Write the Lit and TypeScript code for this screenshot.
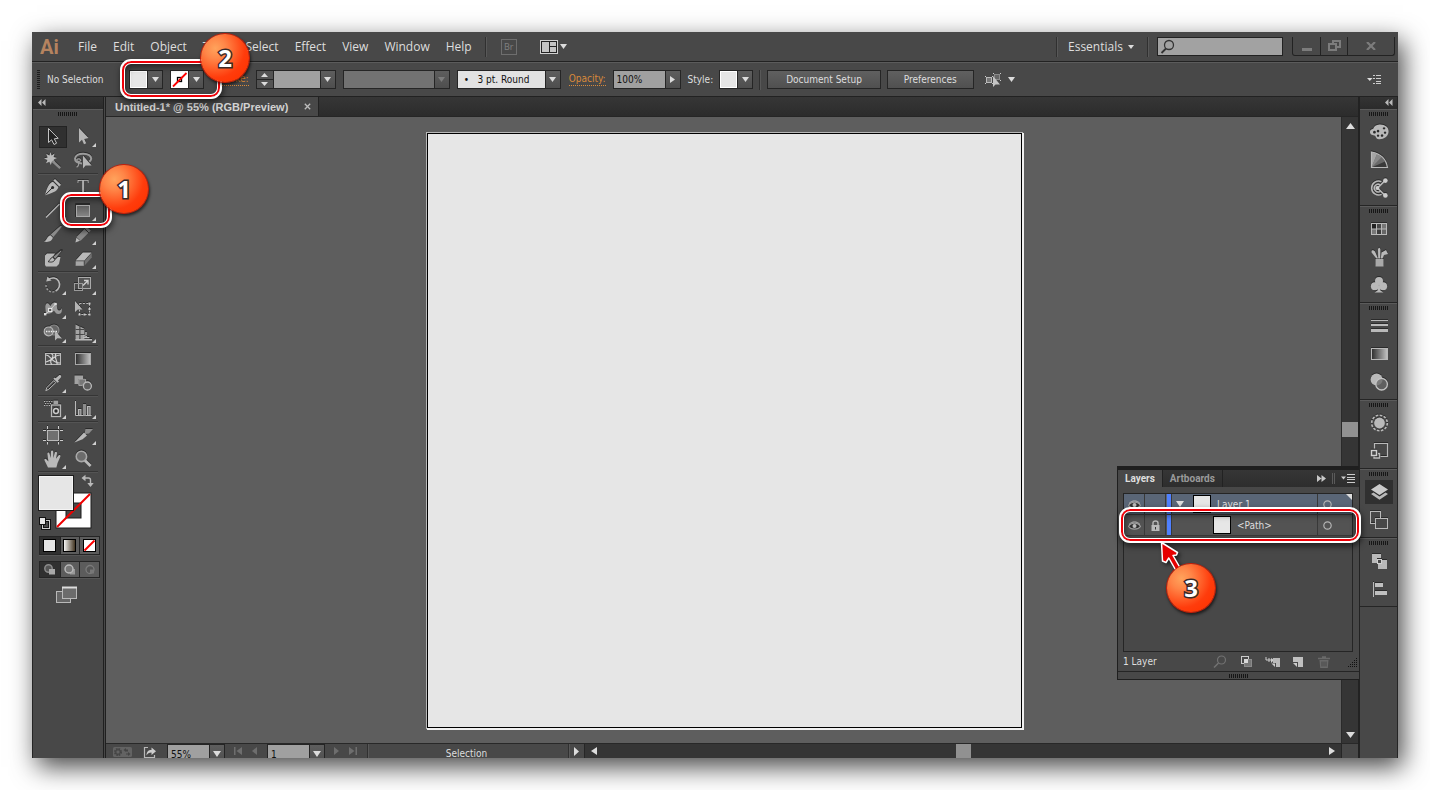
import { LitElement, html, svg, css, TemplateResult, SVGTemplateResult } from "lit";
import { customElement, property } from "lit/decorators.js";
import { classMap } from "lit/directives/class-map.js";

type Glyph = SVGTemplateResult;

const L = "#b9b9b9";
const M = "#8b8b8b";
const D = "#2a2a2a";
const BG = "#484848";

const glyph = (w: number, h: number, body: Glyph, cls = "glyph") =>
  html`<svg class=${cls} width=${w} height=${h} viewBox="0 0 ${w} ${h}" aria-hidden="true">${body}</svg>`;

const down = (w = 7, h = 5, fill = "#dcdcdc") =>
  glyph(w, h, svg`<path d="M0 0H${w}L${w / 2} ${h}Z" fill=${fill} />`);

interface Tool {
  name: string;
  art: Glyph;
  more?: boolean;
  active?: boolean;
}

const toolGroups: Tool[][] = [
  [
    {
      name: "Selection tool",
      active: true,
      art: svg`<path d="M5.5 1.5V15.5L8.6 12.8L11 17.5L13.6 16.2L11.3 11.8L15.2 11.3Z" fill="#222" stroke="#c4c4c4" />`,
    },
    {
      name: "Direct selection tool",
      more: true,
      art: svg`<path d="M6 1V15.5L9 12.8L11 17.3L13.2 16.3L11.3 11.9L15.5 11Z" fill="#b5b5b5" />`,
    },
    {
      name: "Magic wand tool",
      art: svg`<path d="M7.5 1L8.6 4.5L11.5 2.6L10.6 6L14 7L10.8 8.6L12 11.6L9 10.6L7.8 14L6.4 10.8L3 12.3L4.4 9L1 7.6L4.6 6.4L3.2 2.8L6.4 4.6Z" fill=${L} /><path d="M9.5 10L17.2 17.2" stroke=${M} stroke-width="2.4" />`,
    },
    {
      name: "Lasso tool",
      art: svg`<path d="M9 12.400C4.500 12.200 1.800 10.400 2 7.600C2.300 4.400 6 2.600 10.400 2.700C15 2.800 18.300 4.800 18.200 7.600C18 9 17.300 9.800 16.300 10.600" fill="none" stroke="#9c9c9c" stroke-width="2" /><path d="M3.500 9C5 7 8 8 7.500 9.600C6.600 11 4 10.400 3.500 9M5 10.500C6 12.500 5.500 15 3.600 16.200" fill="none" stroke="#9c9c9c" stroke-width="1.300" /><path d="M10 4.500V17.500L12.600 14.600H18.600Z" fill="#b5b5b5" />`,
    },
  ],
  [
    {
      name: "Pen tool",
      art: svg`<path d="M12 2L18 7.800L16.400 9.400L10.400 3.600Z" fill=${L} /><path d="M10 4.800L15.400 10C14.600 13.400 11.600 15.600 2 18.200C3.800 10.600 6.200 6 10 4.800Z" fill=${L} /><path d="M2.600 17.600L9 11" stroke=${D} /><circle cx="9.600" cy="10.400" r="1.500" fill=${D} />`,
    },
    {
      name: "Type tool",
      more: true,
      art: svg`<text x="10" y="16" text-anchor="middle" font-family="Liberation Serif, serif" font-size="19" fill="#b5b5b5">T</text>`,
    },
    {
      name: "Line segment tool",
      more: true,
      art: svg`<path d="M3 16.5L16.5 3" stroke=${L} stroke-width="1.3" />`,
    },
    {
      name: "Rectangle tool",
      more: true,
      art: svg`<rect x="3.5" y="4.5" width="13" height="11" fill="url(#boxFill)" stroke="#a8a8a8" /><path d="M2.5 16V3.5H17" fill="none" stroke=${D} />`,
    },
    {
      name: "Paintbrush tool",
      art: svg`<path d="M19 1.4L10.4 12L7.6 9.6L17.6 .8Z" fill=${M} /><path d="M7.4 10.2L9.8 12.6C9.4 16 5.6 17.6 1 16.6C4 15.400 4 11 7.400 10.200Z" fill=${L} />`,
    },
    {
      name: "Pencil tool",
      more: true,
      art: svg`<path d="M13.6 1.8L17.8 5.6L7.6 15.8L3.4 12Z" fill=${M} /><path d="M11.6 3.8L15.8 7.800" stroke=${D} /><path d="M3.400 12.600L7 15.800L2.400 17.400Z" fill=${L} />`,
    },
    {
      name: "Blob brush tool",
      art: svg`<path d="M2 6.500L4 4.500H12L8 10.500L10 12.500L15 8H17.500L16 15L13.500 17.500H3L2 16Z" fill=${L} /><path d="M19.400 1.500L12.400 10L9.800 8L17.600 1.500Z" fill=${M} stroke=${D} stroke-width=".7" /><path d="M9.600 8.200L12 10.400C11 13.200 8 13.600 5 12.600C7.400 11.600 7 8.800 9.600 8.200Z" fill=${L} stroke=${D} stroke-width=".9" />`,
    },
    {
      name: "Eraser tool",
      more: true,
      art: svg`<path d="M9.800 3.4H18.600L11.400 11.600H2.600Z" fill=${L} /><path d="M2.600 12.200H10.800V16.800H2.600Z" fill="#a6a6a6" /><path d="M11.600 12L18.800 3.800V8.400L11.600 16.600Z" fill="#707070" />`,
    },
  ],
  [
    {
      name: "Rotate tool",
      more: true,
      art: svg`<path d="M5.6 4.4C9 2 13.4 2.6 15.6 6C17.8 10 16 14 12.6 16" fill="none" stroke=${L} stroke-width="1.6" /><path d="M11.4 16.6C7.2 18 2.8 14.6 3 9.8" fill="none" stroke="#9c9c9c" stroke-width="1.5" stroke-dasharray="2 1.500" /><path d="M3.2 6.600L4.400 1.600L8.600 5.400Z" fill=${L} />`,
    },
    {
      name: "Scale tool",
      more: true,
      art: svg`<rect x="5.5" y="2.5" width="12" height="11" fill="#555" stroke="#aaa" /><rect x="1.5" y="8.5" width="8" height="7" fill="none" stroke="#999" /><path d="M10 10.5L14.6 6M11 5.5H15V9.5" fill="none" stroke="#d0d0d0" stroke-width="1.3" />`,
    },
    {
      name: "Width tool",
      more: true,
      art: svg`<path d="M3 14.500C2.500 10 1.500 6.500 3.500 4.500C5.500 3.500 6.500 6 7.500 7C9 4 11.500 2.500 13 4.500C14.500 7 13.600 10.500 15.400 11.200C17 12 18 10.600 18.600 9C19.600 13 18 15.400 15 15C12 14.600 11.500 10.500 10.500 12C9 14 6 15.500 3 14.500Z" fill="#9a9a9a" /><path d="M2 15.500L7 11L12.500 5" stroke="#ddd" /><rect x="5.600" y="9.400" width="3.200" height="3.200" fill="#555" stroke="#eee" /><rect x="1" y="14" width="2.400" height="2.400" fill="#ddd" /><rect x="11.400" y="3.800" width="2.400" height="2.400" fill="#ddd" />`,
    },
    {
      name: "Free transform tool",
      art: svg`<rect x="6.5" y="4.5" width="10" height="11" fill="none" stroke=${L} stroke-dasharray="2 1.4" /><path d="M5.500 14.500h2v2h-2zM15.500 14.500h2v2h-2zM15.500 3.500h2v2h-2zM15.500 9h2v2h-2zM10.500 14.500h2v2h-2z" fill="#c8c8c8" /><path d="M2 2V13L4.8 10.6H9.5Z" fill="#b5b5b5" />`,
    },
    {
      name: "Shape builder tool",
      more: true,
      art: svg`<circle cx="11" cy="7" r="5" fill="#666" stroke=${M} stroke-width="1.2" /><circle cx="5.6" cy="8.4" r="4.4" fill="#777" stroke=${L} stroke-width="1.2" /><path d="M3 8.5H14" stroke="#eee" stroke-dasharray="1.4 1" stroke-width="1.3" /><path d="M12 7.5V17.500L14.400 15.200L19 15.600Z" fill="#b5b5b5" />`,
    },
    {
      name: "Perspective grid tool",
      more: true,
      art: svg`<path d="M2.500 1.500L6.400 3.400V17H2.500ZM7.400 3.800L11.400 5.800V17H7.400Z" fill="#a4a4a4" /><path d="M2.500 6.500H11.500M2.500 11.500H11.500" stroke=${BG} /><path d="M10 12.400L14 13.600M2.500 16.800H19M10 14.600H16.400M13 9V12" stroke=${L} stroke-width="1.400" />`,
    },
  ],
  [
    {
      name: "Mesh tool",
      art: svg`<rect x="2.5" y="4.5" width="15" height="11" fill="#505050" stroke=${L} /><path d="M3 6C8 6 8 14 17 14M8 4.5C14 7 4 12 9 15.5M17 6C11 6 12 10 3 13M13 4.5C10 9 15 11 14 15.5" fill="none" stroke="#d4d4d4" stroke-width="1.1" />`,
    },
    {
      name: "Gradient tool",
      art: svg`<rect x="2.5" y="4.5" width="15" height="11" fill="url(#ramp)" stroke="#a8a8a8" />`,
    },
    {
      name: "Eyedropper tool",
      more: true,
      art: svg`<path d="M12.6 5.2L15.8 2.400C17.400 1.400 18.800 3 17.800 4.400L15 7.600L16 8.600L14.600 9.800L10.400 5.800L11.600 4.400Z" fill=${L} /><path d="M10.800 7.600L12.800 9.600L5.600 16.400L2.800 17.600L3.800 14.600Z" fill="none" stroke=${L} />`,
    },
    {
      name: "Blend tool",
      art: svg`<path d="M1.500 2.500H10V6H5.500V11H1.500Z" fill="#a2a2a2" /><path d="M5.800 6.200H12.600V9L9.400 12.400H5.800Z" fill="#787878" stroke=${L} stroke-width=".8" /><circle cx="14.400" cy="13" r="4" fill="#5e5e5e" stroke=${L} stroke-width="1.300" />`,
    },
  ],
  [
    {
      name: "Symbol sprayer tool",
      more: true,
      art: svg`<path d="M1 2.500H10M2 4.500H9M1 6.500H7" stroke=${L} stroke-width="1.200" stroke-dasharray="1.200 1.200" /><rect x="10.500" y="1.600" width="4.600" height="3.400" fill="#a2a2a2" /><rect x="8.500" y="6" width="9" height="11.500" fill="none" stroke=${L} stroke-width="1.300" /><circle cx="13" cy="12" r="2.400" fill=${D} stroke="#ccc" stroke-width="1.500" />`,
    },
    {
      name: "Column graph tool",
      more: true,
      art: svg`<path d="M2.5 2V16.5H18.500" fill="none" stroke=${L} /><rect x="5.5" y="10.5" width="2.4" height="6" fill="#777" stroke=${L} /><rect x="10" y="5" width="3" height="11.5" fill=${M} /><rect x="14.5" y="7.5" width="2.6" height="9" fill="#777" stroke=${L} />`,
    },
  ],
  [
    {
      name: "Artboard tool",
      art: svg`<rect x="4.5" y="5.5" width="11" height="10" fill="#6f6f6f" stroke=${L} /><path d="M4.5 1V4M15.5 1V4M4.5 17V19.5M15.5 17V19.5M0 5.5H3M17 5.5H20M0 15.5H3M17 15.5H20" stroke="#ccc" />`,
    },
    {
      name: "Slice tool",
      more: true,
      art: svg`<path d="M12.4 4H20L16 8.6L11.6 9Z" fill=${M} /><path d="M11 7.4L14 10.4L9.6 14.2L1.4 17.4Z" fill=${L} />`,
    },
    {
      name: "Hand tool",
      more: true,
      art: svg`<path d="M5 18.4L1.6 11.4C.8 9.6 2.6 9.2 3.6 10.6L5.4 12.6L4.4 5C4.2 3.2 6.2 3 6.6 4.8L7.6 9L8 2.8C8 1.2 10.2 1.2 10.2 2.8L10.4 9L11.8 3.6C12.4 2 14.2 2.6 14 4.2L13 9.8L15.4 6.6C16.6 5.4 18 6.4 17.2 8L14.6 14L13.4 18.4Z" fill=${L} />`,
    },
    {
      name: "Zoom tool",
      art: svg`<circle cx="8.4" cy="7.4" r="5.2" fill="#6c6c6c" stroke="#a8a8a8" stroke-width="1.6" /><path d="M12 11.4L17.6 17" stroke=${L} stroke-width="2.8" />`,
    },
  ],
];

interface DockItem {
  name: string;
  art: Glyph;
  open?: boolean;
}

const dockGroups: DockItem[][] = [
  [
    {
      name: "Color",
      art: svg`<path d="M10.500 2.600C16 2.400 20 5.400 19.600 10C19 14.600 15 17.400 10 17.200C6.600 17 7.400 14 5.400 13.400C3 13 .8 12.400 1 9.800C1.300 7 3.600 7.800 4.400 6.600C5 4.600 7 2.800 10.500 2.600Z" fill=${L} /><path d="M9 7.800a1.300 1.300 0 1 0 .1 0zM5.400 8.800a1.400 1.400 0 1 0 .1 0zM15 5.200a1.300 1.100 0 1 0 .1 0zM16 9.400a1.200 1.200 0 1 0 .1 0zM13 12.200a1.300 1.300 0 1 0 .1 0zM9 12.400a1.200 1.200 0 1 0 .1 0z" fill=${D} />`,
    },
    {
      name: "Color guide",
      art: svg`<path d="M2.500 2V17.500H18.500C17 8 10 3.400 2.500 2Z" fill="#6a6a6a" /><path d="M2.500 17.500V2L8 4Z" fill="#a5a5a5" /><path d="M2.500 17.500L8 4L12.600 7Z" fill="#888" /><path d="M2.500 17.500L16 11.400L18 17.500Z" fill="#3a3a3a" /><path d="M2.500 2V17.500H18.500C17 8 10 3.400 2.500 2Z" fill="none" stroke=${L} stroke-width="1.200" />`,
    },
    {
      name: "Color themes",
      art: svg`<path d="M12.400 3.600A7 7 0 1 0 12.600 16.400" fill="none" stroke=${L} stroke-width="1.500" /><path d="M11.400 7A3.800 3.800 0 1 0 11.600 13" fill="none" stroke=${L} stroke-width="1.500" /><path d="M16 2.600L8.600 10L16 17.400" fill="none" stroke=${L} stroke-width="1.500" /><circle cx="16.400" cy="2.600" r="2.300" fill="#ccc" /><circle cx="16.400" cy="17.400" r="2.300" fill="#ccc" /><circle cx="8.400" cy="10" r="2" fill="#ccc" />`,
    },
  ],
  [
    {
      name: "Swatches",
      art: svg`<rect x="2" y="4" width="16" height="12" fill=${L} /><path d="M3 5h4v4.500H3z" fill="#222" /><path d="M8 5h4v4.500H8z" fill="#484848" /><path d="M13 5h4v4.500h-4zM3 10.500h4V15H3z" fill="#777" /><path d="M8 10.500h4V15H8z" fill="#3c3c3c" /><path d="M13 10.500h4V15h-4z" fill="#666" />`,
    },
    {
      name: "Brushes",
      art: svg`<path d="M6.500 12h8v7.500h-8z" fill="#a9a9a9" /><path d="M7.400 11.500L2.600 5.500C2 2.500 4.500 2.600 6 4.500L9 11.500ZM9.200 11.500L9 2.500C9.400 .2 11 .2 11.400 2.500L11.200 11.500ZM11.800 11.500L12.500 5.500L17 3L19 7L15 8L13.500 11.500Z" fill=${L} />`,
    },
    {
      name: "Symbols",
      art: svg`<circle cx="10" cy="6" r="4" fill=${L} /><circle cx="5.800" cy="11.200" r="3.900" fill=${L} /><circle cx="14.200" cy="11.200" r="3.900" fill=${L} /><path d="M9.300 9H10.700L11.400 15.500L14.500 17.500H5.500L8.600 15.500Z" fill=${L} />`,
    },
  ],
  [
    {
      name: "Stroke",
      art: svg`<path d="M2 4.500H19" stroke=${L} /><path d="M2 9H19" stroke=${L} stroke-width="2" /><path d="M2 14.500H19" stroke=${L} stroke-width="3" />`,
    },
    {
      name: "Gradient",
      art: svg`<rect x="2.500" y="4.500" width="16" height="11" fill="url(#ramp)" stroke=${L} />`,
    },
    {
      name: "Transparency",
      art: svg`<circle cx="7.600" cy="7.600" r="6" fill=${L} /><circle cx="12.600" cy="12.200" r="5.800" fill="#6c6c6c" fill-opacity=".8" stroke="#c4c4c4" stroke-width="1.300" />`,
    },
  ],
  [
    {
      name: "Appearance",
      art: svg`<circle cx="10.500" cy="10" r="5.400" fill=${L} /><circle cx="10.500" cy="10" r="7.800" fill="none" stroke=${L} stroke-width="1.600" stroke-dasharray="2.600 1.480" />`,
    },
    {
      name: "Graphic styles",
      art: svg`<path d="M5.500 7.500V2.500H18.500V15.500H11.500" fill="none" stroke=${L} stroke-width="1.200" /><rect x="2.500" y="9.500" width="5" height="5" fill=${BG} stroke="#d0d0d0" stroke-width="1.400" /><path d="M9 12.500H10.500V17H5V15.500" fill="none" stroke=${L} stroke-width="1.400" />`,
    },
  ],
  [
    {
      name: "Layers",
      open: true,
      art: svg`<path d="M10.500 2L19 7.500L10.500 13L2 7.500Z" fill="#cacaca" /><path d="M2 12L4.500 10.500L10.500 14.400L16.500 10.500L19 12L10.500 17.800Z" fill=${L} />`,
    },
    {
      name: "Artboards",
      art: svg`<rect x="1.500" y="1.500" width="10" height="12" fill="none" stroke=${L} /><rect x="6.500" y="8.500" width="12" height="10" fill=${BG} stroke=${L} />`,
    },
  ],
  [
    {
      name: "Pathfinder",
      art: svg`<path d="M3 3H12V7H8V12H3Z" fill=${L} /><path d="M13 9H18V18H9V13H13Z" fill=${L} /><rect x="8.500" y="8.500" width="4" height="4" fill=${BG} stroke="#d0d0d0" />`,
    },
    {
      name: "Align",
      art: svg`<path d="M4.500 3V18" stroke=${L} /><rect x="6" y="4" width="8" height="4" fill="#c0c0c0" /><rect x="6" y="12" width="12" height="4" fill="#c0c0c0" />`,
    },
  ],
];

/* Gradients that the small drawings refer to. */
const paints = svg`<defs>
  <linearGradient id="ramp"><stop offset="0" stop-color="#2c2c2c" /><stop offset="1" stop-color="#c4c4c4" /></linearGradient>
  <linearGradient id="warm"><stop offset="0" stop-color="#fff" /><stop offset="1" stop-color="#3a2c18" /></linearGradient>
  <linearGradient id="boxFill" x2="0" y2="1"><stop offset="0" stop-color="#5e5e5e" /><stop offset="1" stop-color="#868686" /></linearGradient>
</defs>`;

function collapse(): TemplateResult {
  return glyph(8, 7, svg`<path d="M3.500 0V7L0 3.500ZM7.500 0V7L4 3.500Z" fill=${L} />`);
}

/* Colours and text settings that every part of the workspace shares. */
const base = css`
  :host {
    --face: #484848;
    --edge: #252525;
    --lift: #5b5b5b;
    --field: #a0a0a0;
    --ink: #dedede;
    --ui: "DejaVu Sans Condensed", "Open Sans", sans-serif;
    --menu: "Open Sans", "Noto Sans", sans-serif;
    --tab: Roboto, "Open Sans", sans-serif;
    box-sizing: border-box;
    color: var(--ink);
    font: 10px/12px var(--ui);
  }
  *,
  *::before,
  *::after {
    box-sizing: border-box;
  }
  button,
  input,
  select {
    margin: 0;
    padding: 0;
    border: 0;
    border-radius: 0;
    background: none;
    color: inherit;
    font: inherit;
    appearance: none;
    outline: none;
  }
  svg {
    display: block;
    flex: none;
  }
  .shade {
    filter: drop-shadow(0 -1px 0 #2b2b2b);
  }
  .grip {
    width: 20px;
    height: 4px;
    background: repeating-linear-gradient(90deg, #161616 0 1px, transparent 1px 2px);
  }
`;

@customElement("tool-rail")
export class ToolRail extends LitElement {
  static styles = [
    base,
    css`
      :host {
        display: flex;
        flex-direction: column;
        flex: none;
        width: 74px;
        background: var(--face);
        border-left: 1px solid var(--edge);
        border-right: 3px double #202020;
      }
      .head {
        height: 12px;
        padding: 2px 5px;
        background: linear-gradient(#343434, #2b2b2b);
      }
      .hold {
        display: flex;
        justify-content: center;
        height: 16px;
        padding-top: 2px;
        border-top: 1px solid var(--lift);
      }
      .group {
        display: grid;
        grid-template-columns: 30px 30px;
        margin-left: 5px;
        width: 60px;
        border-bottom: 1px solid #353535;
        box-shadow: 0 1px #545454;
        margin-bottom: 1px;
      }
      .tool {
        position: relative;
        display: grid;
        place-items: center;
        height: 24px;
      }
      .active {
        background: #303030;
        box-shadow: inset 0 0 0 1px #484848, inset 0 0 0 2px #232323;
      }
      .more::after {
        content: "";
        position: absolute;
        right: 2px;
        bottom: 2px;
        border: 2px solid transparent;
        border-right-color: #d0d0d0;
        border-bottom-color: #d0d0d0;
      }
      .paint {
        padding: 1px 0 6px 4px;
      }
      .row {
        display: grid;
        grid-template-columns: repeat(3, 1fr);
        margin: 0 3px 6px 6px;
        border: 1px solid var(--edge);
        box-shadow: 0 1px #555;
      }
      .row button {
        display: grid;
        place-items: center;
        height: 17px;
        background: #5c5c5c;
      }
      .row.draw button {
        height: 15px;
      }
      .row button + button {
        border-left: 1px solid var(--edge);
      }
      .row .on {
        background: #303030;
      }
      .screen {
        margin: 2px auto 0 23px;
      }
    `,
  ];

  render() {
    return html`
      <div class="head">${collapse()}</div>
      <div class="hold"><div class="grip"></div></div>
      ${toolGroups.map(
        (group) => html`<div class="group">
          ${group.map(
            (t) => html`<button
              aria-label=${t.name}
              class=${classMap({ tool: true, more: !!t.more, active: !!t.active })}
            >
              ${glyph(20, 20, svg`${paints}${t.art}`, "shade")}
            </button>`
          )}
        </div>`
      )}
      <div class="paint">
        ${glyph(
          60,
          56,
          svg`
            <rect x="19" y="19" width="35" height="35" fill="#fff" stroke="#1c1c1c" />
            <rect x="29" y="29" width="15" height="15" fill=${BG} stroke="#1c1c1c" />
            <path d="M20 53L53 20" stroke="#f00000" stroke-width="2" />
            <rect x="1.500" y="1.500" width="35" height="35" fill="#e6e6e6" stroke="#1c1c1c" />
            <rect x="2.500" y="2.500" width="33" height="33" fill="none" stroke="#f4f4f4" />
            <path d="M48 4H51.500Q53.500 4 53.500 6V10" fill="none" stroke=${L} stroke-width="1.400" />
            <path d="M44.500 4L48.500 .8V7.200ZM50.300 9H56.700L53.500 13Z" fill=${L} />
            <rect x="5.500" y="46.500" width="7" height="8" fill=${BG} stroke="#111" stroke-width="3" />
            <rect x="5.500" y="46.500" width="7" height="8" fill="none" stroke="#ccc" />
            <rect x="2.500" y="43.500" width="6" height="7" fill="#e6e6e6" stroke="#111" />
          `
        )}
      </div>
      <div class="row">
        <button class="on" aria-label="Color">
          ${glyph(13, 13, svg`<rect x=".5" y=".5" width="12" height="12" fill="#e6e6e6" stroke="#000" />`)}
        </button>
        <button aria-label="Gradient">
          ${glyph(13, 13, svg`${paints}<rect x=".5" y=".5" width="12" height="12" fill="url(#warm)" stroke="#000" />`)}
        </button>
        <button aria-label="None">
          ${glyph(13, 13, svg`<rect x=".5" y=".5" width="12" height="12" fill="#fff" stroke="#000" /><path d="M1.500 11.500L11.500 1.500" stroke="#f00" stroke-width="2" />`)}
        </button>
      </div>
      <div class="row draw">
        <button class="on" aria-label="Draw normal">
          ${glyph(12, 11, svg`<circle cx="4.500" cy="4.500" r="3.700" fill="#555" stroke=${M} stroke-width="1.500" /><path d="M5 5h6v5.500H5z" fill="#a8a8a8" />`)}
        </button>
        <button aria-label="Draw behind">
          ${glyph(12, 11, svg`<path d="M6 5h5v5.500H6z" fill="#999" /><circle cx="5" cy="5" r="4" fill="#777" stroke=${L} stroke-width="1.500" />`)}
        </button>
        <button aria-label="Draw inside" disabled>
          ${glyph(12, 11, svg`<circle cx="6" cy="5.500" r="4" fill="#555" stroke="#7a7a7a" stroke-width="1.300" /><path d="M6 5.500h4v4H6z" fill="#777" />`)}
        </button>
      </div>
      <button class="screen" aria-label="Change screen mode">
        ${glyph(21, 18, svg`<rect x=".5" y="5.500" width="14" height="11" fill="#666" stroke=${L} /><rect x="6.500" y="1.500" width="14" height="11" fill="#6c6c6c" stroke=${L} /><path d="M6 1.500H21" stroke="#ddd" stroke-width="2" />`)}
      </button>
    `;
  }
}

@customElement("panel-dock")
export class PanelDock extends LitElement {
  static styles = [
    base,
    css`
      :host {
        display: block;
        flex: none;
        width: 40px;
        background: var(--face);
        border-left: 2px solid #222;
        border-right: 1px solid var(--edge);
      }
      .head {
        display: flex;
        justify-content: flex-end;
        height: 12px;
        padding: 2px 4px;
        background: linear-gradient(#343434, #2b2b2b);
      }
      .group {
        display: flex;
        flex-direction: column;
        align-items: center;
        padding: 2px 0 3px;
        border-top: 1px solid var(--lift);
        border-bottom: 1px solid var(--edge);
      }
      .grip {
        margin-bottom: 2px;
      }
      .item {
        display: grid;
        place-items: center;
        width: 30px;
        height: 28px;
      }
      .open {
        background: linear-gradient(#303030, #303030) center / 28px 24px no-repeat;
      }
    `,
  ];

  render() {
    return html`
      <div class="head">${collapse()}</div>
      ${dockGroups.map(
        (group) => html`<div class="group">
          <div class="grip"></div>
          ${group.map(
            (d) => html`<button aria-label=${d.name} class=${classMap({ item: true, open: !!d.open })}>
              ${glyph(20, 20, svg`${paints}${d.art}`, "shade")}
            </button>`
          )}
        </div>`
      )}
    `;
  }
}

const eye = () =>
  glyph(
    13,
    9,
    svg`<path d="M.5 5.500C3 1 10 1 12.500 5.500C10 9 3 9 .5 5.500Z" fill="#303030" stroke="#9c9c9c" stroke-width="1.100" /><path d="M1 3.500C4 0 9 0 12 3.500" fill="none" stroke="#b4b4b4" /><circle cx="6.500" cy="5" r="2" fill="#bdbdbd" />`
  );

@customElement("layers-panel")
export class LayersPanel extends LitElement {
  static styles = [
    base,
    css`
      :host {
        display: flex;
        flex-direction: column;
        background: var(--face);
        border: 1px solid #1f1f1f;
        border-top-width: 4px;
        border-right-width: 0;
      }
      .tabs {
        display: flex;
        align-items: stretch;
        height: 17px;
        background: linear-gradient(#363636, #2d2d2d);
      }
      .tab {
        padding: 0 7px;
        border-right: 1px solid #222;
        color: #9a9a9a;
        font: bold 10px/16px var(--tab);
      }
      .tab.on {
        background: var(--face);
        color: var(--ink);
      }
      .side {
        display: flex;
        align-items: center;
        gap: 6px;
        margin-left: auto;
        padding-right: 4px;
      }
      .list {
        flex: 1;
        margin: 6px 6px 0 5px;
        border: 1px solid var(--edge);
      }
      .line {
        display: grid;
        grid-template-columns: 20px 21px 6px 1fr 35px;
        height: 21px;
        border-bottom: 1px solid #393939;
        background: #535353;
      }
      .line.on {
        background: #5a6677;
      }
      .line > * {
        display: flex;
        align-items: center;
        justify-content: center;
        border-left: 1px solid #393939;
      }
      .line > :first-child {
        border-left: 0;
      }
      .line .bar {
        border-left: 1px solid #393939;
        background: linear-gradient(#4f80ff, #4f80ff) 1px 0 / 4px 100% no-repeat;
      }
      .line .name {
        justify-content: flex-start;
        gap: 6px;
        padding-left: 4px;
        line-height: 18px;
      }
      .name > .glyph {
        margin-right: 3px;
      }
      .line .child {
        padding-left: 41px;
      }
      .label {
        padding-top: 2px;
      }
      .thumb {
        width: 18px;
        height: 18px;
        border: 1px solid #000;
        background: #e6e6e6;
      }
      .line .target {
        position: relative;
        justify-content: flex-start;
        padding-left: 5px;
      }
      .line.on .target::after {
        content: "";
        position: absolute;
        top: 0;
        right: 0;
        border: 3px solid transparent;
        border-top-color: #ddd;
        border-right-color: #ddd;
      }
      .foot {
        display: flex;
        align-items: center;
        justify-content: space-between;
        height: 19px;
        padding: 0 2px 0 5px;
      }
      .acts {
        display: flex;
        align-items: center;
        gap: 12px;
      }
      .acts button {
        display: grid;
        place-items: center;
        width: 14px;
      }
      .acts > .glyph {
        margin-left: 4px;
      }
      .base {
        display: flex;
        justify-content: center;
        height: 8px;
        padding-top: 2px;
        border-top: 1px solid #252525;
      }
    `,
  ];

  render() {
    return html`
      <div class="tabs" role="tablist">
        <button class="tab on" role="tab">Layers</button>
        <button class="tab" role="tab">Artboards</button>
        <div class="side">
          ${glyph(9, 7, svg`<path d="M0 0V7L4.500 3.500ZM4.500 0V7L9 3.500Z" fill="#c8c8c8" />`)}
          ${glyph(3, 11, svg`<path d="M.5 0V11M2.500 0V11" stroke="#5a5a5a" />`)}
          ${glyph(14, 9, svg`<path d="M0 2.500H5L2.500 5.500Z" fill="#ccc" /><path d="M6 .5H14M6 3.500H14M6 5.500H14M6 8.500H14" stroke="#ccc" />`)}
        </div>
      </div>
      <div class="list">
        <div class="line on">
          <button aria-label="Toggle visibility">${eye()}</button>
          <button aria-label="Toggle lock"></button>
          <span class="bar"></span>
          <span class="name">
            ${down(8, 6)}
            <span class="thumb"></span>
            <span class="label">Layer 1</span>
          </span>
          <button class="target" aria-label="Target layer">${this.ring()}</button>
        </div>
        <div class="line">
          <button aria-label="Toggle visibility">${eye()}</button>
          <button aria-label="Toggle lock">
            ${glyph(9, 11, svg`<path d="M2 5V3Q2 1 4.500 1Q7 1 7 3V5" fill="none" stroke=${L} stroke-width="1.400" /><path d="M.5 5h8v6h-8z" fill=${L} /><path d="M4 7h1v2.500H4z" fill="#333" />`)}
          </button>
          <span class="bar"></span>
          <span class="name child">
            <span class="thumb"></span>
            <span class="label">&lt;Path&gt;</span>
          </span>
          <button class="target" aria-label="Target path">${this.ring()}</button>
        </div>
      </div>
      <div class="foot">
        <span>1 Layer</span>
        <div class="acts">
          <button aria-label="Locate object">
            ${glyph(14, 13, svg`<circle cx="8.500" cy="5" r="4" fill="none" stroke="#727272" stroke-width="1.200" /><path d="M5.500 8L1 12.500" stroke="#727272" stroke-width="1.500" />`)}
          </button>
          <button aria-label="Make clipping mask">
            ${glyph(13, 13, svg`<rect x="1.500" y="1.500" width="7" height="7" fill="none" stroke="#ccc" /><rect x="4.500" y="4.500" width="7" height="7" fill="#777" stroke=${M} /><rect x="4" y="4" width="4" height="4" fill="#d8d8d8" />`)}
          </button>
          <button aria-label="Create new sublayer">
            ${glyph(15, 12, svg`<path d="M1 1V4H7M4 2V6" fill="none" stroke="#ccc" /><path d="M6 2L9 4L6 7Z" fill="#ccc" /><path d="M8 2H15V11H11V7H8Z" fill=${L} /><path d="M6.500 7.500H10V11Z" fill="#ccc" />`)}
          </button>
          <button aria-label="Create new layer">
            ${glyph(12, 12, svg`<path d="M1 1H11V11H6V6H1Z" fill="#c0c0c0" /><path d="M1 7H5V11Z" fill="#ccc" />`)}
          </button>
          <button aria-label="Delete selection">
            ${glyph(12, 12, svg`<path d="M0 2.500H12M4 1H8" stroke="#696969" stroke-width="1.500" /><path d="M1.500 4H10.500L9.800 12H2.200Z" fill="#696969" /><path d="M4 5.500V10.500M6 5.500V10.500M8 5.500V10.500" stroke=${BG} />`)}
          </button>
          ${glyph(10, 10, svg`<path d="M9 1h1v1H9zM7 3h1v1H7zM9 3h1v1H9zM5 5h1v1H5zM7 5h1v1H7zM9 5h1v1H9zM3 7h1v1H3zM5 7h1v1H5zM7 7h1v1H7zM9 7h1v1H9zM1 9h1v1H1zM3 9h1v1H3zM5 9h1v1H5zM7 9h1v1H7zM9 9h1v1H9z" fill="#111" />`)}
        </div>
      </div>
      <div class="base"><div class="grip"></div></div>
    `;
  }

  private ring() {
    return glyph(9, 9, svg`<circle cx="4.500" cy="4.500" r="3.700" fill="none" stroke="#b4b4b4" stroke-width="1.200" />`);
  }
}

@customElement("step-badge")
export class StepBadge extends LitElement {
  static styles = css`
    :host {
      display: grid;
      place-items: center;
      width: 48px;
      height: 48px;
      border-radius: 50%;
      background: radial-gradient(circle at 30% 30%, #ffa35c 0, #ff8648 22%, #ff3c0c 62%, #ff3604 78%, #e84a28 100%);
      box-shadow: 0 0 0 1px #c81e08, 1px 2px 3px 1px rgba(0, 0, 0, 0.6);
      color: #fff;
      font: bold 24px/24px "Open Sans", sans-serif;
    }
    span {
      -webkit-text-stroke: 3px #3a2a28;
      paint-order: stroke fill;
    }
  `;

  @property({ type: Number }) step = 1;

  render() {
    return html`<span>${this.step}</span>`;
  }
}

@customElement("app-root")
export class AppRoot extends LitElement {
  static styles = [
    base,
    css`
      :host {
        display: flex;
        height: 100vh;
        padding: 32px;
        overflow: hidden;
        background: #fff;
      }
      .frame {
        position: relative;
        display: flex;
        flex: 1;
        flex-direction: column;
        min-width: 0;
        background: var(--face);
        box-shadow: 5px 9px 24px rgba(0, 0, 0, 0.72);
      }
      .bar {
        display: flex;
        flex: none;
        align-items: center;
      }

      /* Menu bar */
      .menu {
        height: 30px;
        padding: 0 3px 0 8px;
        border-bottom: 1px solid #222;
        font: 12px/18px var(--menu);
      }
      .brand {
        width: 26px;
        color: #b5835f;
        font: bold 20px/24px var(--tab);
      }
      .menu a {
        margin-left: 8px;
        padding: 0 4px;
        color: inherit;
        text-decoration: none;
      }
      .menu nav {
        display: flex;
      }
      .rule {
        width: 2px;
        height: 20px;
        border-left: 1px solid #303030;
        border-right: 1px solid #585858;
      }
      .menu .rule {
        margin: 0 14px 0 9px;
      }
      .bridge {
        width: 16px;
        height: 16px;
        margin-right: 23px;
        border: 1px solid #6e6e6e;
        color: #808080;
        font: 9px/13px var(--menu);
      }
      .arrange {
        display: flex;
        align-items: center;
        gap: 2px;
      }
      .right {
        display: flex;
        align-items: center;
        margin-left: auto;
      }
      .menu .right .rule {
        margin: 0 8px 0 0;
      }
      .works {
        display: flex;
        align-items: center;
        width: 81px;
        padding-left: 2px;
      }
      .works select {
        width: 60px;
      }
      .search {
        display: flex;
        align-items: center;
        width: 126px;
        height: 19px;
        padding: 0 2px;
        border: 1px solid #222;
        background: #a2a2a2;
        color: #111;
      }
      .search input {
        flex: 1;
        min-width: 0;
      }
      .system {
        display: flex;
        align-self: flex-start;
        margin-left: 9px;
        border: 1px solid #222;
        border-top: 0;
        border-radius: 0 0 3px 3px;
      }
      .system button {
        display: grid;
        place-items: center;
        width: 27px;
        height: 18px;
      }
      .system button + button {
        border-left: 1px solid #222;
      }
      .system .close {
        width: 47px;
      }

      /* Options bar */
      .options {
        height: 34px;
        padding: 0 17px 0 5px;
        border-top: 1px solid var(--lift);
      }
      .vgrip {
        width: 3px;
        height: 20px;
        margin-right: 7px;
        background: repeating-linear-gradient(#1c1c1c 0 1px, transparent 1px 2px);
      }
      .state {
        width: 82px;
      }
      .combo {
        display: flex;
        height: 19px;
        border: 1px solid var(--edge);
        color: #111;
      }
      .combo input,
      .combo select {
        flex: 1;
        min-width: 0;
        padding-left: 3px;
        background: var(--field);
      }
      .knob {
        display: grid;
        flex: none;
        place-items: center;
        width: 15px;
        border-left: 1px solid var(--edge);
        background: linear-gradient(#5e5e5e, #4e4e4e);
      }
      .patch {
        width: 17px;
        border: 1px solid #fff;
        background: #e6e6e6;
      }
      .paintpair {
        display: flex;
        gap: 7px;
        width: 88px;
      }
      .orange {
        color: #d98a3a;
        border-bottom: 1px dotted #d98a3a;
        text-decoration: none;
      }
      .stepper {
        display: flex;
        flex-direction: column;
        width: 17px;
        border-right: 1px solid var(--edge);
        background: #535353;
      }
      .stepper button {
        display: grid;
        flex: 1;
        place-items: center;
      }
      .stepper button + button {
        border-top: 1px solid var(--edge);
      }
      .stroke {
        width: 80px;
        margin: 0 7px;
      }
      .profile {
        width: 107px;
        margin-right: 7px;
      }
      .profile input {
        background: #727272;
      }
      .brush {
        width: 104px;
        margin-right: 8px;
      }
      .brush select {
        padding-left: 6px;
        background: #e2e2e2;
      }
      .opacity {
        width: 68px;
        margin: 0 7px;
      }
      .style {
        margin: 0 6px;
      }
      .push {
        height: 19px;
        margin-left: 6px;
        padding: 0 16px;
        border: 1px solid var(--edge);
        background: linear-gradient(#606060, #505050);
      }
      .push.wide {
        padding: 0 18px;
      }
      .isolate {
        display: flex;
        align-items: center;
        gap: 7px;
        margin-left: 11px;
      }

      /* Work area */
      .work {
        display: flex;
        flex: 1;
        min-height: 0;
        border-top: 1px solid #222;
      }
      .doc {
        display: flex;
        flex: 1;
        flex-direction: column;
        min-width: 0;
      }
      .tabs {
        display: flex;
        flex: none;
        height: 20px;
        border-bottom: 1px solid #262626;
        background: linear-gradient(#363636, #2c2c2c);
      }
      .tab {
        display: flex;
        align-items: center;
        gap: 16px;
        padding: 0 7px 0 9px;
        border-right: 1px solid #222;
        background: var(--face);
        color: #d2d2d2;
        font: bold 11px/18px "Liberation Sans", sans-serif;
      }
      .view {
        display: flex;
        flex: 1;
        min-height: 0;
      }
      .canvas {
        display: grid;
        flex: 1;
        place-items: center;
        padding-left: 2px;
        background: #5e5e5e;
      }
      .board {
        height: calc(100% - 31px);
        aspect-ratio: 1;
        border: 1px solid #000;
        background: #e6e6e6;
        box-shadow: 1px 1px 0 1px #f0f0f0, 0 0 0 1px #b8b8b8;
      }
      .vscroll {
        display: flex;
        flex: none;
        flex-direction: column;
        align-items: center;
        width: 17px;
        padding: 6px 0 5px;
        border-left: 1px solid #2a2a2a;
        background: #353535;
      }
      .vthumb {
        width: 16px;
        height: 15px;
        background: #919191;
      }
      .pre {
        flex: 292;
      }
      .post {
        flex: 294;
      }
      .status {
        flex: none;
        align-items: flex-start;
        height: 15px;
        padding: 0 16px 0 7px;
        overflow: hidden;
        border-top: 1px solid #282828;
      }
      .status > .glyph {
        margin-top: 3px;
      }
      .status .combo {
        width: 58px;
        margin: 0 9px 0 11px;
      }
      .status .page {
        margin-left: 0;
      }
      .status .combo input {
        height: 18px;
      }
      .status .skip {
        margin-right: 10px;
      }
      .mode {
        width: 199px;
        padding: 4px 4px 0 0;
        text-align: center;
      }
      .hscroll {
        display: flex;
        flex: 1;
        height: 14px;
        margin-left: 2px;
        padding: 0 6px;
        border-left: 1px solid #262626;
        border-right: 1px solid #262626;
        background: #353535;
      }
      .hscroll .glyph {
        margin-top: 3px;
      }
      .hthumb {
        width: 15px;
        background: #919191;
      }
      .track {
        flex: 1;
      }

      /* Things that lie over the workspace */
      .float {
        position: absolute;
        right: 39px;
        bottom: 78px;
        width: 242px;
        height: 214px;
      }
      .mark {
        position: absolute;
        border: 2px solid #fff;
        border-radius: 11px;
        box-shadow: inset 0 0 0 2px #f00008, inset 0 0 0 3px #fff, inset 1px 3px 6px 3px rgba(0, 0, 0, 0.5),
          1px 3px 6px rgba(0, 0, 0, 0.6);
        pointer-events: none;
      }
      .m1 {
        left: 28px;
        top: 160px;
        width: 52px;
        height: 36px;
      }
      .m2 {
        left: 88px;
        top: 27px;
        width: 102px;
        height: 40px;
      }
      .m3 {
        right: 37px;
        bottom: 215px;
        width: 242px;
        height: 36px;
      }
      .pointer {
        position: absolute;
        right: 209px;
        bottom: 181px;
        filter: drop-shadow(2px 2px 2px rgba(0, 0, 0, 0.6));
      }
      step-badge {
        position: absolute;
      }
      .b1 {
        left: 68px;
        top: 133px;
      }
      .b2 {
        left: 169px;
        top: 2px;
      }
      .b3 {
        right: 183px;
        bottom: 146px;
      }
    `,
  ];

  render() {
    return html`
      <div class="frame">
        ${this.menuBar()} ${this.optionsBar()}
        <div class="work">
          <tool-rail></tool-rail>
          ${this.document()}
          <panel-dock></panel-dock>
        </div>
        <layers-panel class="float"></layers-panel>
        <div class="mark m1"></div>
        <div class="mark m2"></div>
        <div class="mark m3"></div>
        ${glyph(
          30,
          36,
          svg`<path d="M2.500 1.500L18.500 11.500L17.500 14L14 14.500L23.500 31L19.500 34L9.800 17L7 21.500L3.500 20Z" fill="#e60000" stroke="#fff" stroke-width="1.500" stroke-linejoin="round" />`,
          "pointer"
        )}
        <step-badge class="b1" .step=${1}></step-badge>
        <step-badge class="b2" .step=${2}></step-badge>
        <step-badge class="b3" .step=${3}></step-badge>
      </div>
    `;
  }

  private menuBar() {
    const items = ["File", "Edit", "Object", "Type", "Select", "Effect", "View", "Window", "Help"];
    return html`<header class="bar menu">
      <div class="brand">Ai</div>
      <nav>${items.map((m) => html`<a href="#">${m}</a>`)}</nav>
      <div class="rule"></div>
      <button class="bridge" aria-label="Go to Bridge">Br</button>
      <button class="arrange" aria-label="Arrange documents">
        ${glyph(18, 14, svg`<rect x=".5" y=".5" width="17" height="13" fill="#222" stroke="#d0d0d0" /><path d="M2 2h7v10H2zM10 2h6v4h-6zM10 7h6v5h-6z" fill="#c4c4c4" />`)}
        ${down()}
      </button>
      <div class="right">
        <div class="rule"></div>
        <label class="works">
          <select aria-label="Workspace"><option>Essentials</option></select>
          ${down(6, 4)}
        </label>
        <div class="rule"></div>
        <label class="search">
          ${glyph(15, 15, svg`<circle cx="9" cy="6" r="4.500" fill="none" stroke="#333" stroke-width="1.300" /><path d="M6 9.500L1.500 14" stroke="#333" stroke-width="1.800" />`)}
          <input type="text" aria-label="Search" />
        </label>
        <div class="system">
          <button aria-label="Minimize">${glyph(10, 10, svg`<path d="M0 7h10v3H0z" fill="#7c7c7c" />`)}</button>
          <button aria-label="Restore">
            ${glyph(13, 11, svg`<path d="M5 4V1H12V7H9" fill="none" stroke="#7c7c7c" stroke-width="2" /><rect x="1" y="4" width="7" height="6" fill="none" stroke="#7c7c7c" stroke-width="2" />`)}
          </button>
          <button class="close" aria-label="Close">${glyph(10, 8, svg`<path d="M1 0L9 8M9 0L1 8" stroke="#7c7c7c" stroke-width="2.200" />`)}</button>
        </div>
      </div>
    </header>`;
  }

  private optionsBar() {
    return html`<div class="bar options">
      <div class="vgrip"></div>
      <span class="state">No Selection</span>
      <div class="paintpair">
        <div class="combo">
          <button class="patch" aria-label="Fill"></button>
          <button class="knob" aria-label="Fill swatches">${down()}</button>
        </div>
        <div class="combo">
          <button aria-label="Stroke">
            ${glyph(17, 17, svg`<path d="M0 0H17V17H0Z" fill="#fff" /><rect x="6.500" y="6.500" width="4" height="4" fill="none" stroke="#000" stroke-width="1.300" /><path d="M2 15.500L15.500 2" stroke="#f00" stroke-width="1.800" />`)}
          </button>
          <button class="knob" aria-label="Stroke swatches">${down()}</button>
        </div>
      </div>
      <a class="orange" href="#">Stroke:</a>
      <div class="combo stroke">
        <div class="stepper">
          <button aria-label="Increase stroke weight">${glyph(7, 4, svg`<path d="M0 4H7L3.500 0Z" fill="#dcdcdc" />`)}</button>
          <button aria-label="Decrease stroke weight">${down(7, 4)}</button>
        </div>
        <input type="text" aria-label="Stroke weight" />
        <button class="knob" aria-label="Stroke weight presets">${down()}</button>
      </div>
      <div class="combo profile">
        <input type="text" aria-label="Width profile" disabled />
        <button class="knob" aria-label="Width profiles" disabled>${down(7, 5, "#7c7c7c")}</button>
      </div>
      <label class="combo brush">
        <select aria-label="Brush definition"><option>${"•\u00a0\u00a0\u00a03 pt. Round"}</option></select>
        <span class="knob">${down()}</span>
      </label>
      <a class="orange" href="#">Opacity:</a>
      <div class="combo opacity">
        <input type="text" aria-label="Opacity" value="100%" />
        <button class="knob" aria-label="Opacity slider">${glyph(5, 7, svg`<path d="M0 0V7L5 3.500Z" fill="#dcdcdc" />`)}</button>
      </div>
      <span>Style:</span>
      <div class="combo style">
        <button class="patch" aria-label="Graphic style"></button>
        <button class="knob" aria-label="Graphic styles">${down()}</button>
      </div>
      <div class="rule"></div>
      <button class="push wide">Document Setup</button>
      <button class="push">Preferences</button>
      <button class="isolate" aria-label="Select similar objects">
        ${glyph(16, 14, svg`<rect x="1.500" y="4.500" width="5" height="5" fill="#777" stroke=${L} /><path d="M0 3.500h1M7 3.500h1M0 10.500h1M7 10.500h1" stroke="#ccc" /><rect x="9.500" y="1.500" width="5" height="5" fill="#666" stroke=${M} /><path d="M8 .5h1M15 .5h1M15 7.500h1" stroke="#ccc" /><path d="M8 3V14L10.500 11.500H15Z" fill="#c4c4c4" />`)}
        ${down()}
      </button>
      <button class="right" aria-label="Options menu">
        ${glyph(14, 9, svg`<path d="M0 3H5.500L2.800 6Z" fill="#ddd" /><path d="M6 .5H8M6 3.500H8M6 8.500H8M9 .5H14M9 3.500H14M9 6.500H14M9 8.500H14" stroke="#ccc" />`)}
      </button>
    </div>`;
  }

  private document() {
    const skip = (d: string, w: number) => glyph(w, 9, svg`<path d=${d} fill="#6e6e6e" />`, "glyph skip");
    return html`<main class="doc">
      <div class="tabs">
        <div class="tab">
          <span>Untitled-1* @ 55% (RGB/Preview)</span>
          <button aria-label="Close document">
            ${glyph(7, 7, svg`<path d="M.8 .8L6.200 6.200M6.200 .8L.8 6.200" stroke="#bdbdbd" stroke-width="1.300" />`)}
          </button>
        </div>
      </div>
      <div class="view">
        <div class="canvas"><div class="board"></div></div>
        <div class="vscroll">
          ${glyph(9, 6, svg`<path d="M0 6H9L4.500 0Z" fill="#ddd" />`)}
          <span class="pre"></span><span class="vthumb"></span><span class="post"></span>
          ${down(9, 6)}
        </div>
      </div>
      <footer class="bar status">
        ${glyph(19, 10, svg`<rect width="19" height="10" rx="1.500" fill="#636363" /><circle cx="5" cy="5" r="3" fill="none" stroke="#444" stroke-width="2" stroke-dasharray="1.600 .76" /><circle cx="5" cy="5" r="2.200" fill="none" stroke="#444" /><path d="M10.500 3L13 1V5ZM17.500 7L15 5V9ZM13 2.500h2v2h-2zM13 6.500h2v1h-2z" fill="#444" />`)}
        ${glyph(24, 11, svg`<path d="M16 .5H12.500V10.500H22.500V8" fill="none" stroke=${L} stroke-width="1.200" /><path d="M14.500 8.500C14.500 5 16 3 19.500 3V.5L24 4.300L19.500 8V5.500C17 5.500 15.500 6.500 14.500 8.500Z" fill="#ccc" />`)}
        <div class="combo">
          <input type="text" aria-label="Zoom level" value="55%" />
          <button class="knob" aria-label="Zoom presets">${down(8, 6)}</button>
        </div>
        ${skip("M0 0H1.500V8H0ZM8 0V8L2.500 4Z", 8)} ${skip("M5 0V8L0 4Z", 5)}
        <div class="combo page">
          <input type="text" aria-label="Artboard number" value="1" />
          <button class="knob" aria-label="Artboards">${down(8, 6)}</button>
        </div>
        ${skip("M0 0V8L5 4Z", 5)} ${skip("M0 0V8L5.500 4ZM6.500 0H8V8H6.500Z", 8)}
        <div class="rule"></div>
        <span class="mode">Selection</span>
        <div class="rule"></div>
        ${glyph(12, 9, svg`<path d="M4 0V9L9 4.500Z" fill="#ddd" />`)}
        <div class="hscroll">
          ${glyph(6, 8, svg`<path d="M6 0V8L0 4Z" fill="#ddd" />`)}
          <span class="track"></span>
          <span class="hthumb"></span>
          <span class="track"></span>
          ${glyph(6, 8, svg`<path d="M0 0V8L6 4Z" fill="#ddd" />`)}
        </div>
      </footer>
    </main>`;
  }
}
